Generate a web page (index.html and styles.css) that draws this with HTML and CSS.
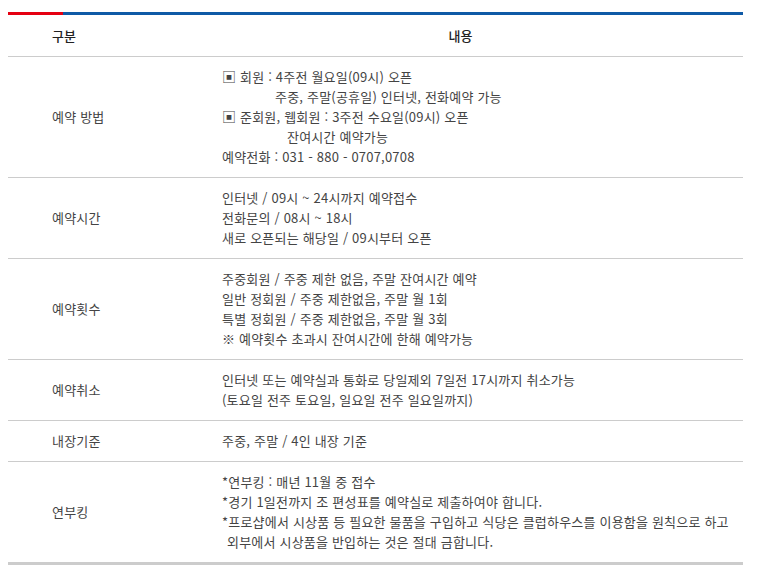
FILE: index.html
```html
<!DOCTYPE html>
<html lang="ko">
<head>
<meta charset="utf-8">
<link rel="stylesheet" href="styles.css">
</head>
<body>
<div class="wrap">
  <div class="topbar"><span class="red"></span><span class="blue"></span></div>
  <table class="info">
    <colgroup><col class="c1"><col class="c2"></colgroup>
    <thead>
      <tr><th class="th1">구분</th><th class="th2">내용</th></tr>
    </thead>
    <tbody>
      <tr>
        <td class="label">예약 방법</td>
        <td class="desc">
          <div><span class="box">▣</span> 회원 : 4주전 월요일(09시) 오픈</div>
          <div class="ind1">주중, 주말(공휴일) 인터넷, 전화예약 가능</div>
          <div><span class="box">▣</span> 준회원, 웹회원 : 3주전 수요일(09시) 오픈</div>
          <div class="ind2">잔여시간 예약가능</div>
          <div>예약전화 : 031 - 880 - 0707,0708</div>
        </td>
      </tr>
      <tr>
        <td class="label">예약시간</td>
        <td class="desc">
          <div>인터넷 / 09시 ~ 24시까지 예약접수</div>
          <div>전화문의 / 08시 ~ 18시</div>
          <div>새로 오픈되는 해당일 / 09시부터 오픈</div>
        </td>
      </tr>
      <tr>
        <td class="label">예약횟수</td>
        <td class="desc">
          <div>주중회원 / 주중 제한 없음, 주말 잔여시간 예약</div>
          <div>일반 정회원 / 주중 제한없음, 주말 월 1회</div>
          <div>특별 정회원 / 주중 제한없음, 주말 월 3회</div>
          <div>※ 예약횟수 초과시 잔여시간에 한해 예약가능</div>
        </td>
      </tr>
      <tr>
        <td class="label">예약취소</td>
        <td class="desc">
          <div>인터넷 또는 예약실과 통화로 당일제외 7일전 17시까지 취소가능</div>
          <div>(토요일 전주 토요일, 일요일 전주 일요일까지)</div>
        </td>
      </tr>
      <tr>
        <td class="label">내장기준</td>
        <td class="desc">
          <div>주중, 주말 / 4인 내장 기준</div>
        </td>
      </tr>
      <tr class="last">
        <td class="label">연부킹</td>
        <td class="desc">
          <div>*연부킹 : 매년 11월 중 접수</div>
          <div>*경기 1일전까지 조 편성표를 예약실로 제출하여야 합니다.</div>
          <div>*프로샵에서 시상품 등 필요한 물품을 구입하고 식당은 클럽하우스를 이용함을 원칙으로 하고</div>
          <div class="ind3">외부에서 시상품을 반입하는 것은 절대 금합니다.</div>
        </td>
      </tr>
    </tbody>
  </table>
</div>
</body>
</html>
```

FILE: styles.css
```css
html, body {
  margin: 0;
  padding: 0;
  background: #fff;
}
body {
  padding: 12px 0 0 8px;
  font-family: "Noto Sans CJK KR", "Noto Sans", sans-serif;
  font-size: 13px;
  color: #444;
}
.wrap {
  width: 735px;
}
.topbar {
  display: flex;
  height: 3px;
}
.topbar .red {
  width: 55px;
  background: #e50012;
}
.topbar .blue {
  flex: 1;
  background: #0f5aa6;
}
.info {
  width: 100%;
  border-collapse: collapse;
  table-layout: fixed;
}
.c1 { width: 170px; }
.info th {
  height: 41px;
  padding: 0;
  font-weight: 500;
  color: #222;
  border-bottom: 1px solid #ccc;
  line-height: 20px;
}
.th1 {
  text-align: left;
  padding-left: 44px !important;
}
.th2 {
  text-align: center;
}
.info td {
  border-bottom: 1px solid #ccc;
  line-height: 20px;
  vertical-align: middle;
  letter-spacing: 0.2px;
}
.label {
  padding: 10px 0 10px 44px;
}
.desc {
  padding: 10px 0 10px 44px;
}
.box {
  font-size: 14px;
  line-height: 1;
}
.ind1 { padding-left: 53px; }
.ind2 { padding-left: 65px; }
.ind3 { padding-left: 5px; }
.info tr.last td {
  border-bottom: 3px solid #ccc;
}
```
